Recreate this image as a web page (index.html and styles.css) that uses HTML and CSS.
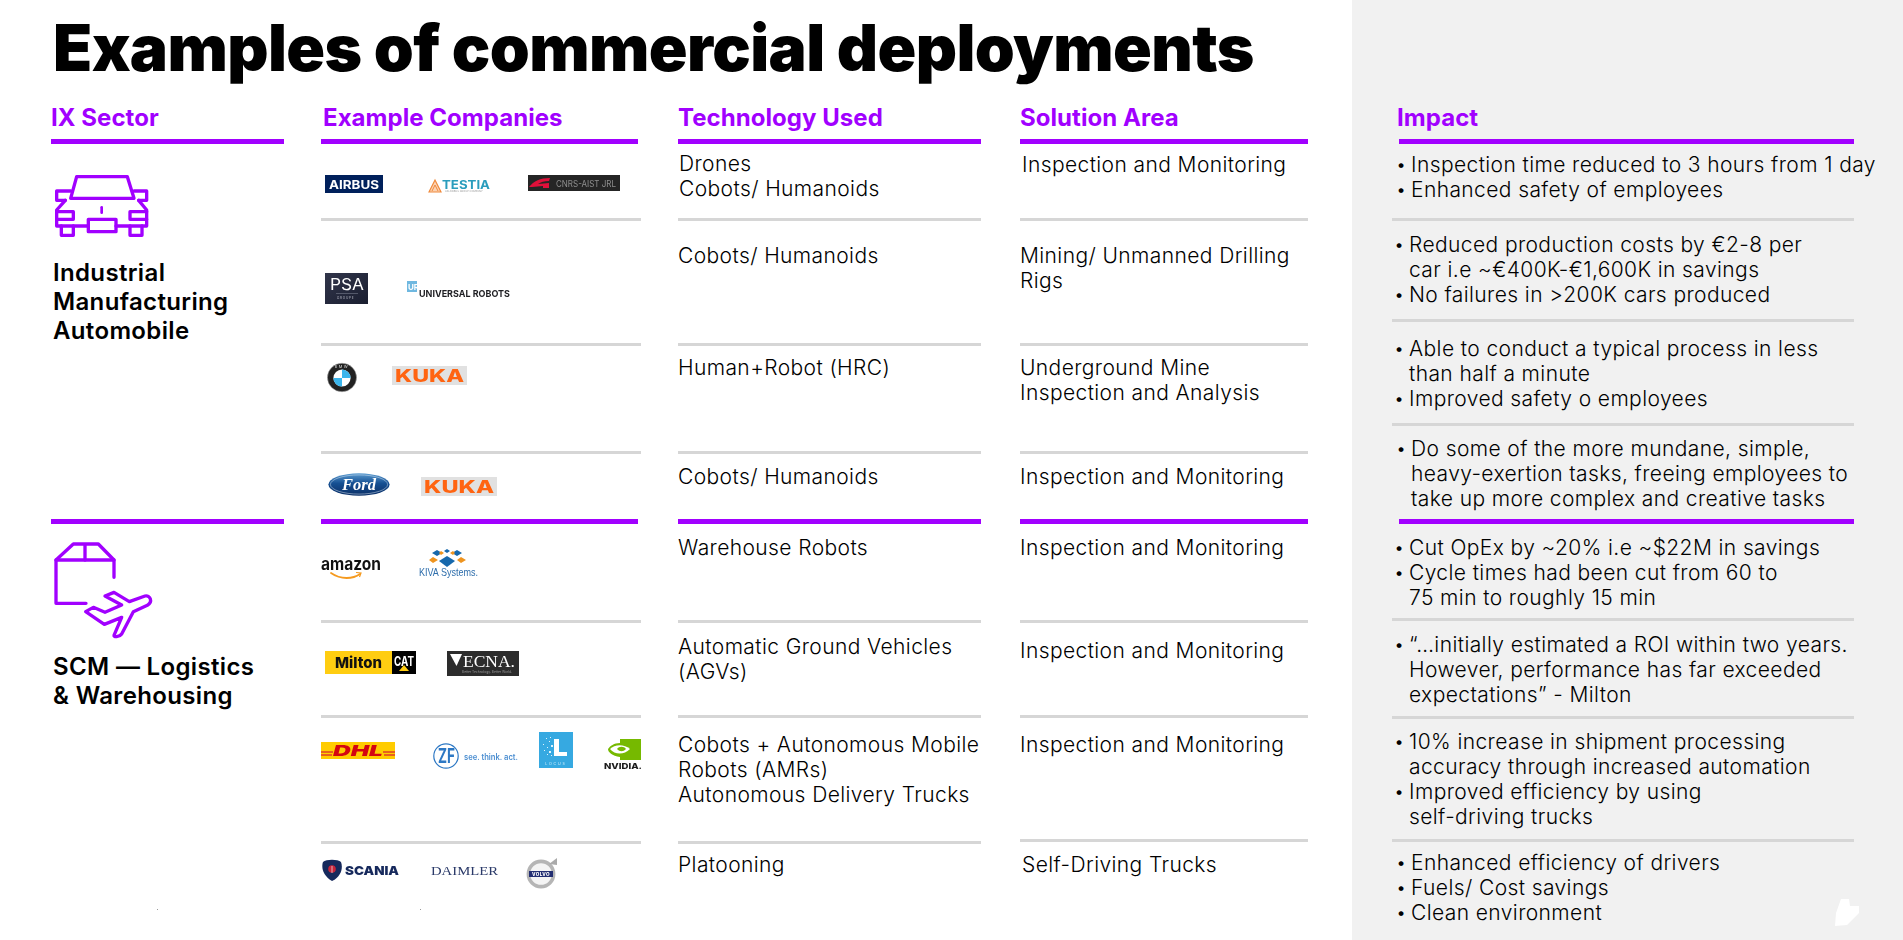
FILE: index.html
```html
<!DOCTYPE html>
<html lang="en">
<head>
<meta charset="utf-8">
<title>Examples of commercial deployments</title>
<link rel="stylesheet" href="styles.css">
</head>
<body>
<div class="slide">
  <section class="main">
    <h1 class="title">Examples of commercial deployments</h1>
    <div class="columns">
      <div class="col col-sector">
        <h2 class="head">IX Sector</h2>
        <div class="sector">
          <svg class="icon icon-car" viewBox="33 21 300 204" width="100" height="68" fill="none" stroke="#a100ff" stroke-width="10" stroke-linejoin="round" stroke-linecap="round" aria-hidden="true">
            <path d="M110 35H262L282 100H92Z"/>
            <path d="M92 78H50V106H76M282 78H320V106H296"/>
            <path d="M76 106L50 135V183H145M296 106L320 135V183H228"/>
            <path d="M50 140H100V163H50M320 140H270V163H320"/>
            <rect x="145" y="163" width="83" height="37"/>
            <path d="M64 183V211H100V183M270 183V211H306V183"/>
            <path d="M185 127V143" stroke-width="8"/>
          </svg>
          <p class="sector-name sector-name-a">Industrial<br>Manufacturing<br>Automobile</p>
        </div>
        <div class="sector sector-b">
          <svg class="icon icon-box" viewBox="33 15 315 315" width="105" height="105" fill="none" stroke="#a100ff" stroke-width="10" stroke-linejoin="round" stroke-linecap="round" aria-hidden="true">
            <path d="M222 142V90H48V220H138"/>
            <path d="M48 90L100 42H175L222 90M135 42V90"/>
            <path d="M195 198L222 187L268 215L315 198C330 194 340 215 322 226L280 245L245 312C238 322 220 322 222 316L245 262L193 283L137 245L160 232L195 247L245 225Z"/>
          </svg>
          <p class="sector-name sector-name-b">SCM — Logistics<br>&amp; Warehousing</p>
        </div>
      </div>

      <div class="col col-companies">
        <h2 class="head">Example Companies</h2>
        <div class="cell logos">
          <svg class="logo l-airbus" viewBox="0 0 58 18" width="58" height="18"><rect width="58" height="18" fill="#00205b"/><text x="4" y="13.5" class="t-sans" font-size="12" font-weight="700" textLength="50" lengthAdjust="spacingAndGlyphs" fill="#fff">AIRBUS</text></svg>
          <svg class="logo l-testia" viewBox="0 0 63 14" width="63" height="14"><path d="M1 13L7 1L13 13Z" fill="#fbd3b4" stroke="#f08a3c" stroke-width="1.2"/><path d="M4 12L7 6L10 12" fill="none" stroke="#f08a3c"/><text x="14" y="10" class="t-sans" font-size="12" font-weight="700" textLength="48" lengthAdjust="spacingAndGlyphs" fill="#2a9dbd">TESTIA</text><text x="17" y="13.4" class="t-sans" font-size="2.6" fill="#999">AN AIRBUS GROUP COMPANY</text></svg>
          <svg class="logo l-cnrs" viewBox="0 0 92 16" width="92" height="16"><rect width="92" height="16" fill="#252525"/><path d="M1 12C6 6 12 3 22 3L21 6C16 6 13 7 10 9L21 8V13H15V11L4 12Z" fill="#e0103a"/><text x="28" y="12" class="t-sans" font-size="9" textLength="60" lengthAdjust="spacingAndGlyphs" fill="#8f8f8f">CNRS-AIST JRL</text></svg>
        </div>
        <div class="cell logos">
          <svg class="logo l-psa" viewBox="0 0 43 31" width="43" height="31"><defs><linearGradient id="psaBg" x1="0" y1="0" x2="1" y2="1"><stop offset="0" stop-color="#31354a"/><stop offset="1" stop-color="#1a1e30"/></linearGradient></defs><rect width="43" height="31" fill="url(#psaBg)"/><text x="5" y="17" class="t-sans" font-size="16" textLength="34" lengthAdjust="spacingAndGlyphs" fill="#fff">PSA</text><path d="M11 20.5H33" stroke="#767a8c" stroke-width=".6"/><text x="12" y="26" class="t-sans" font-size="3.2" letter-spacing=".7" fill="#b9bbc6">GROUPE</text></svg>
          <svg class="logo l-ur" viewBox="0 0 104 17" width="104" height="17"><rect x="0" y="0" width="10" height="11" fill="#6fb8e0"/><text x="1" y="9" class="t-sans" font-size="8" font-weight="700" fill="#fff">UR</text><text x="12" y="16" class="t-sans" font-size="9.4" font-weight="700" textLength="91" lengthAdjust="spacingAndGlyphs" fill="#1e1e22">UNIVERSAL ROBOTS</text></svg>
        </div>
        <div class="cell logos">
          <svg class="logo l-bmw" viewBox="0 0 30 29" width="30" height="29"><ellipse cx="15" cy="14.5" rx="14.6" ry="14.3" fill="#222" stroke="#bbb" stroke-width=".5"/><circle cx="15" cy="15" r="8.6" fill="#fff"/><path d="M15 15V6.4A8.6 8.6 0 0 1 23.6 15ZM15 15V23.6A8.6 8.6 0 0 1 6.4 15Z" fill="#3bb5ec"/><text x="15" y="5.4" text-anchor="middle" class="t-sans" font-size="4" letter-spacing="1.4" fill="#ddd">BMW</text></svg>
          <svg class="logo l-kuka-a" viewBox="0 0 75 19" width="75" height="19"><rect width="75" height="19" fill="#e1e1e1"/><text x="3" y="16" class="t-sans" font-size="17" font-weight="800" textLength="69" lengthAdjust="spacingAndGlyphs" fill="#ff6411">KUKA</text></svg>
        </div>
        <div class="cell logos">
          <svg class="logo l-ford" viewBox="0 0 62 23" width="62" height="23"><defs><linearGradient id="fordBg" x1="0" y1="0" x2="0" y2="1"><stop offset="0" stop-color="#5a9bd0"/><stop offset=".45" stop-color="#154f92"/><stop offset="1" stop-color="#0c2f66"/></linearGradient></defs><ellipse cx="31" cy="11.5" rx="30.6" ry="11.2" fill="url(#fordBg)"/><ellipse cx="31" cy="11.5" rx="28.6" ry="9.6" fill="none" stroke="#d5e3f0" stroke-width=".5"/><text x="31" y="17" text-anchor="middle" font-family="'Liberation Serif',serif" font-style="italic" font-weight="700" font-size="16.5" fill="#fff">Ford</text></svg>
          <svg class="logo l-kuka-b" viewBox="0 0 76 19" width="76" height="19"><rect width="76" height="19" fill="#e1e1e1"/><text x="3" y="16" class="t-sans" font-size="17" font-weight="800" textLength="70" lengthAdjust="spacingAndGlyphs" fill="#ff6411">KUKA</text></svg>
        </div>
        <div class="cell cell-major logos">
          <svg class="logo l-amazon" viewBox="0 0 61 27" width="61" height="27"><text x="0" y="13" class="t-sans" font-size="17" font-weight="700" textLength="60" lengthAdjust="spacingAndGlyphs" fill="#111">amazon</text><path d="M10 16C20 23 32 22 39 17" fill="none" stroke="#f59a1f" stroke-width="1.8" stroke-linecap="round"/><path d="M35 15.5L40 16L38.5 20" fill="none" stroke="#f59a1f" stroke-width="1.2"/></svg>
          <svg class="logo l-kiva" viewBox="0 0 60 27" width="60" height="27"><path d="M28 7L36 12L28 18L20 12Z" fill="#1668ac"/><path d="M18 1L23 4L18 7L13 4ZM38 1L43 4L38 7L33 4ZM28 0L31 2L28 4L25 2Z" fill="#1668ac"/><path d="M14 8L19 11L14 14L10 11ZM42 8L47 11L42 14L38 11ZM22 2L25 4L22 6L20 4ZM34 2L36 4L34 6L31 4Z" fill="#ee941f"/><text x="0" y="26.5" font-family="'Liberation Sans',Arial,sans-serif" font-size="11.2" textLength="59" lengthAdjust="spacingAndGlyphs" fill="#2d6dab">KIVA Systems.</text></svg>
        </div>
        <div class="cell logos">
          <svg class="logo l-milton" viewBox="0 0 91 23" width="91" height="23"><rect width="67" height="23" fill="#ffcd11"/><rect x="67" width="24" height="23" fill="#000"/><text x="10" y="17" class="t-sans" font-size="15" font-weight="800" textLength="47" lengthAdjust="spacingAndGlyphs" fill="#111">Milton</text><text x="69" y="15" class="t-sans" font-size="13" font-weight="700" textLength="20" lengthAdjust="spacingAndGlyphs" fill="#fff">CAT</text><path d="M74 20L79 14L84 20Z" fill="#ffcd11"/></svg>
          <svg class="logo l-vecna" viewBox="0 0 72 25" width="72" height="25"><rect width="72" height="25" fill="#2c2c2c"/><path d="M3 3H15L9.5 15Z" fill="#fff"/><text x="16" y="16" font-family="'Liberation Serif',serif" font-size="16" textLength="52" lengthAdjust="spacingAndGlyphs" fill="#fff">ECNA.</text><text x="15" y="21.5" class="t-sans" font-size="3.4" textLength="50" lengthAdjust="spacingAndGlyphs" fill="#999">Better Technology. Better World.</text></svg>
        </div>
        <div class="cell logos">
          <svg class="logo l-dhl" viewBox="0 0 74 17" width="74" height="17"><rect width="74" height="17" fill="#ffcc00"/><path d="M0 9H12V11H0ZM0 12H11V14H0ZM62 9H74V11H62ZM63 12H74V14H63Z" fill="#e8601c"/><text x="12" y="14" class="t-sans" font-size="15" font-weight="900" font-style="italic" textLength="50" lengthAdjust="spacingAndGlyphs" fill="#d40511">DHL</text></svg>
          <svg class="logo l-zf" viewBox="0 0 85 26" width="85" height="26"><circle cx="13" cy="13" r="12.2" fill="#fff" stroke="#2d78c4" stroke-width="1.2"/><text x="5" y="20" class="t-sans" font-size="20" font-weight="700" textLength="17" lengthAdjust="spacingAndGlyphs" fill="#2d78c4">ZF</text><text x="31" y="17" class="t-sans" font-size="8.6" font-weight="600" textLength="54" lengthAdjust="spacingAndGlyphs" fill="#4b8ed1">see. think. act.</text></svg>
          <svg class="logo l-locus" viewBox="0 0 34 36" width="34" height="36"><rect width="34" height="36" fill="#36a9e1"/><path d="M15 7H20V20H28V24H15Z" fill="#fff"/><path d="M4 12h1v1H4zM7 6h1v1H7zM10 9h1v1h-1zM5 18h1v1H5zM8 15h1v1H8zM10 19h2v2h-2zM12 13h2v2h-2zM8 22h1v1H8zM12 23h1v1h-1zM11 5h1v1h-1z" fill="#dff3fc"/><text x="17" y="33" text-anchor="middle" class="t-sans" font-size="3.6" letter-spacing="1.8" fill="#d6f0fb">LOCUS</text></svg>
          <svg class="logo l-nvidia" viewBox="0 0 38 32" width="38" height="32"><path d="M16 5V1H37V22H16V19C8 18 4 14 4 11C6 8 10 5 16 5Z" fill="#76b900"/><path d="M6 11C10 7 19 5 26 11C20 17 11 17 6 11Z" fill="#fff"/><path d="M13 11C15 8 20 8 22 11C19 14 16 14 13 11Z" fill="#76b900"/><text x="0" y="31" class="t-sans" font-size="8.2" font-weight="800" textLength="38" lengthAdjust="spacingAndGlyphs" fill="#1a1a1a">NVIDIA.</text></svg>
        </div>
        <div class="cell logos">
          <svg class="logo l-scania" viewBox="0 0 78 22" width="78" height="22"><path d="M2 3C5 0 17 0 20 3C22 8 21 17 11 22C2 17 0 8 2 3Z" fill="#16295c"/><circle cx="11" cy="10" r="3.8" fill="#c8243a"/><path d="M11 7V14" stroke="#eee" stroke-width=".7"/><text x="24" y="16" class="t-sans" font-size="12.4" font-weight="900" textLength="54" lengthAdjust="spacingAndGlyphs" fill="#16295c">SCANIA</text></svg>
          <svg class="logo l-daimler" viewBox="0 0 67 12" width="67" height="12"><text x="0" y="11" font-family="'Liberation Serif',serif" font-size="13" textLength="67" lengthAdjust="spacingAndGlyphs" fill="#2b3a69">DAIMLER</text></svg>
          <svg class="logo l-volvo" viewBox="0 0 31 31" width="31" height="31"><circle cx="15" cy="16" r="12.6" fill="#f4f4f4" stroke="#b5b5b5" stroke-width="3.6"/><path d="M23 6L31 0V7Z" fill="#aaa"/><rect x="3" y="13" width="24" height="6" fill="#232e72"/><text x="15" y="18" text-anchor="middle" class="t-sans" font-size="4.6" font-weight="800" letter-spacing=".4" fill="#fff">VOLVO</text></svg>
        </div>
      </div>

      <div class="col col-tech">
        <h2 class="head">Technology Used</h2>
        <div class="cell text pt-7 x-1">Drones<br>Cobots/ Humanoids</div>
        <div class="cell text pt-22">Cobots/ Humanoids</div>
        <div class="cell text pt-9">Human+Robot (HRC)</div>
        <div class="cell text pt-10">Cobots/ Humanoids</div>
        <div class="cell cell-major text pt-11">Warehouse Robots</div>
        <div class="cell text pt-11">Automatic Ground Vehicles<br>(AGVs)</div>
        <div class="cell text pt-14">Cobots + Autonomous Mobile<br>Robots (AMRs)<br>Autonomous Delivery Trucks</div>
        <div class="cell text pt-8">Platooning</div>
      </div>

      <div class="col col-solution">
        <h2 class="head">Solution Area</h2>
        <div class="cell text pt-8 x-2">Inspection and Monitoring</div>
        <div class="cell text pt-22">Mining/ Unmanned Drilling<br>Rigs</div>
        <div class="cell text pt-9">Underground Mine<br>Inspection and Analysis</div>
        <div class="cell text pt-10">Inspection and Monitoring</div>
        <div class="cell cell-major text pt-11">Inspection and Monitoring</div>
        <div class="cell text pt-15">Inspection and Monitoring</div>
        <div class="cell text pt-14">Inspection and Monitoring</div>
        <div class="cell text pt-10 x-2">Self-Driving Trucks</div>
      </div>
    </div>
    <span class="speck speck-a"></span>
    <span class="speck speck-b"></span>
  </section>

  <aside class="panel">
    <div class="col col-impact">
      <h2 class="head">Impact</h2>
      <ul class="cell impact pt-8 x-6">
        <li>Inspection time reduced to 3 hours from 1 day</li>
        <li>Enhanced safety of employees</li>
      </ul>
      <ul class="cell impact pt-11 x-4">
        <li>Reduced production costs by €2-8 per<br>car i.e ~€400K-€1,600K in savings</li>
        <li>No failures in &gt;200K cars produced</li>
      </ul>
      <ul class="cell impact pt-14 x-4">
        <li>Able to conduct a typical process in less<br>than half a minute</li>
        <li>Improved safety o employees</li>
      </ul>
      <ul class="cell impact pt-10 x-6">
        <li>Do some of the more mundane, simple,<br>heavy-exertion tasks, freeing employees to<br>take up more complex and creative tasks</li>
      </ul>
      <ul class="cell cell-major impact pt-11">
        <li>Cut OpEx by ~20% i.e ~$22M in savings</li>
        <li>Cycle times had been cut from 60 to<br>75 min to roughly 15 min</li>
      </ul>
      <ul class="cell impact pt-11 x-4">
        <li>“…initially estimated a ROI within two years.<br>However, performance has far exceeded<br>expectations” - Milton</li>
      </ul>
      <ul class="cell impact pt-10 x-4">
        <li>10% increase in shipment processing<br>accuracy through increased automation</li>
        <li>Improved efficiency by using<br>self-driving trucks</li>
      </ul>
      <ul class="cell impact pt-8 x-6">
        <li>Enhanced efficiency of drivers</li>
        <li>Fuels/ Cost savings</li>
        <li>Clean environment</li>
      </ul>
    </div>
    <svg class="blob" viewBox="0 0 24 27" width="24" height="27" aria-hidden="true"><path d="M6 0H14L15 7H24V14L12 26L0 27L1 14Z" fill="#fff"/></svg>
  </aside>
</div>
</body>
</html>
```
FILE: styles.css
```css
* {
  box-sizing: border-box;
}

html,
body {
  margin: 0;
  padding: 0;
  background: #fff;
}

body {
  font-family: Inter, "Liberation Sans", Arial, sans-serif;
  color: #000;
  overflow: hidden;
}

.slide {
  position: relative;
  display: flex;
  width: 1903px;
  height: 940px;
  overflow: hidden;
}

.main {
  width: 1352px;
  flex: none;
  padding-left: 51px;
}

.title {
  margin: 0 0 0 2px;
  height: 100px;
  padding-top: 10px;
  font-size: 64px;
  line-height: 76px;
  font-weight: 900;
  letter-spacing: -.58px;
  white-space: nowrap;
}

.columns {
  display: flex;
}

.col {
  display: grid;
  grid-template-columns: minmax(0, 1fr);
  height: 840px;
}

.col-sector {
  width: 233px;
  margin-right: 37px;
  grid-template-rows: 44px 375px 421px;
}

.col-companies {
  width: 320px;
  margin-right: 37px;
  grid-template-rows: 44px 74px 125px 108px 68px 101px 95px 126px 99px;
}

.col-tech {
  width: 303px;
  margin-right: 39px;
  grid-template-rows: 44px 74px 125px 108px 68px 101px 95px 126px 99px;
}

.col-solution {
  width: 288px;
  grid-template-rows: 44px 74px 125px 108px 68px 101px 95px 124px 101px;
}

.panel {
  position: relative;
  flex: 1;
  padding: 100px 49px 0 40px;
  background: #f1f1f1;
}

.col-impact {
  width: 462px;
  grid-template-rows: 44px 74px 101px 104px 96px 99px 98px 123px 101px;
}

.head {
  margin: 0;
  padding-top: 3px;
  border-bottom: 5px solid #a100ff;
  font-size: 24px;
  line-height: 29px;
  font-weight: 700;
  letter-spacing: .05px;
  color: #a100ff;
  white-space: nowrap;
}

.col-companies .head {
  padding-left: 2px;
  margin-right: 3px;
}

.col-impact .head {
  margin-left: 7px;
  text-indent: -2px;
}

.cell {
  margin: 0;
  border-top: 3px solid #d6d6d6;
}

.col > .head + .cell {
  border-top: 0;
}

.cell-major {
  border-top: 5px solid #a100ff;
}

.col-companies .cell-major {
  margin-right: 3px;
}

.col-impact .cell-major {
  margin-left: 7px;
  padding-left: 0;
}

.col-impact .cell-major li {
  margin-left: -3px;
}

.text,
.impact {
  font-size: 21px;
  line-height: 25px;
  font-weight: 300;
  letter-spacing: .4px;
  white-space: nowrap;
}

.x-1 {
  padding-left: 1px;
}

.x-2 {
  padding-left: 2px;
}

.pt-7 { padding-top: 7px; }
.pt-8 { padding-top: 8px; }
.pt-9 { padding-top: 9px; }
.pt-10 { padding-top: 10px; }
.pt-11 { padding-top: 11px; }
.pt-14 { padding-top: 14px; }
.pt-15 { padding-top: 15px; }
.pt-22 { padding-top: 22px; }

.impact {
  list-style: none;
}

.impact.x-4 {
  padding-left: 4px;
}

.impact.x-6 {
  padding-left: 6px;
}

.impact li {
  position: relative;
  padding-left: 13px;
}

.impact li::before {
  content: "•";
  position: absolute;
  left: -2px;
  top: 0;
  font-size: 18px;
}

.sector {
  display: flex;
  flex-direction: column;
  align-items: flex-start;
}

.sector-b {
  border-top: 5px solid #a100ff;
}

.icon {
  flex: none;
  display: block;
}

.icon-car {
  margin-top: 28px;
}

.icon-box {
  margin-top: 11px;
}

.sector-name {
  margin: 0;
  padding-left: 2px;
  font-size: 24px;
  line-height: 29px;
  font-weight: 600;
  letter-spacing: .35px;
  white-space: nowrap;
}

.sector-name-a {
  margin-top: 18px;
}

.sector-name-b {
  margin-top: 12px;
}

.logos {
  display: flex;
  align-items: flex-start;
}

.logo {
  flex: none;
  display: block;
  overflow: visible;
  filter: blur(.3px);
}

.t-sans {
  font-family: Inter, "Liberation Sans", Arial, sans-serif;
}

.l-airbus { margin: 31px 0 0 4px; }
.l-testia { margin: 35px 0 0 45px; }
.l-cnrs { margin: 31px 0 0 37px; }
.l-psa { margin: 52px 0 0 4px; }
.l-ur { margin: 60px 0 0 39px; }
.l-bmw { margin: 17px 0 0 6px; }
.l-kuka-a { margin: 20px 0 0 35px; }
.l-ford { margin: 19px 0 0 7px; }
.l-kuka-b { margin: 23px 0 0 31px; }
.l-amazon { margin: 33px 0 0 0; }
.l-kiva { margin: 25px 0 0 37px; }
.l-milton { margin: 28px 0 0 4px; }
.l-vecna { margin: 28px 0 0 31px; }
.l-dhl { margin: 24px 0 0 0; }
.l-zf { margin: 25px 0 0 38px; }
.l-locus { margin: 14px 0 0 21px; }
.l-nvidia { margin: 20px 0 0 31px; }
.l-scania { margin: 15px 0 0 0; }
.l-daimler { margin: 20px 0 0 32px; }
.l-volvo { margin: 14px 0 0 28px; }

.speck {
  position: absolute;
  top: 909px;
  width: 1px;
  height: 1px;
  background: #9a9a9a;
}

.speck-a { left: 157px; }
.speck-b { left: 420px; }

.blob {
  position: absolute;
  left: 483px;
  top: 899px;
}
```
